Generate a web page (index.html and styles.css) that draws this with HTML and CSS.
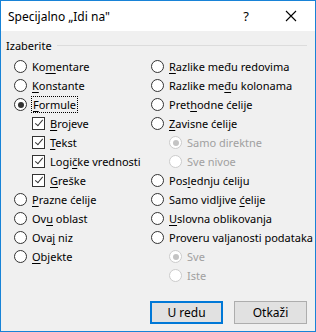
FILE: index.html
```html
<!DOCTYPE html>
<html lang="sr">
<head>
    <meta charset="UTF-8">
    <title>Specijalno „Idi na"</title>
    <link rel="stylesheet" href="styles.css">
</head>
<body>
    <div class="dialog">
        <!-- Title bar -->
        <div class="titlebar">
            <span class="title">Specijalno „Idi na"</span>
            <span class="help">?</span>
            <svg class="close" width="12" height="12" viewBox="0 0 12 12">
                <path d="M1 1 L11 11 M11 1 L1 11" stroke="#000" stroke-width="1.1" fill="none"/>
            </svg>
        </div>

        <div class="content">
            <div class="group-label">
                <span>Izaberite</span>
                <div class="line"></div>
            </div>

            <div class="options">
                <div class="column">
                    <div class="opt"><span class="radio"></span><span>Ko<u>m</u>entare</span></div>
                    <div class="opt"><span class="radio"></span><span><u>K</u>onstante</span></div>
                    <div class="opt"><span class="radio checked"></span><span class="focus"><u>F</u>ormule</span></div>
                    <div class="opt sub"><span class="check"></span><span><u>B</u>rojeve</span></div>
                    <div class="opt sub"><span class="check"></span><span><u>T</u>ekst</span></div>
                    <div class="opt sub"><span class="check"></span><span>Logi<u>č</u>ke vrednosti</span></div>
                    <div class="opt sub"><span class="check"></span><span><u>G</u>reške</span></div>
                    <div class="opt"><span class="radio"></span><span><u>P</u>razne ćelije</span></div>
                    <div class="opt"><span class="radio"></span><span>Ov<u>u</u> oblast</span></div>
                    <div class="opt"><span class="radio"></span><span>Ova<u>j</u> niz</span></div>
                    <div class="opt"><span class="radio"></span><span><u>O</u>bjekte</span></div>
                </div>
                <div class="column">
                    <div class="opt"><span class="radio"></span><span><u>R</u>azlike među redovima</span></div>
                    <div class="opt"><span class="radio"></span><span>Razlike me<u>đ</u>u kolonama</span></div>
                    <div class="opt"><span class="radio"></span><span>Pret<u>h</u>odne ćelije</span></div>
                    <div class="opt"><span class="radio"></span><span><u>Z</u>avisne ćelije</span></div>
                    <div class="opt sub disabled"><span class="radio checked"></span><span>Samo direktne</span></div>
                    <div class="opt sub disabled"><span class="radio"></span><span>Sve nivoe</span></div>
                    <div class="opt"><span class="radio"></span><span>Pos<u>l</u>ednju ćeliju</span></div>
                    <div class="opt"><span class="radio"></span><span>Samo vidljive <u>ć</u>elije</span></div>
                    <div class="opt"><span class="radio"></span><span><u>U</u>slovna oblikovanja</span></div>
                    <div class="opt"><span class="radio"></span><span>Proveru valjanosti podataka</span></div>
                    <div class="opt sub disabled"><span class="radio checked"></span><span>Sve</span></div>
                    <div class="opt sub disabled"><span class="radio"></span><span>Iste</span></div>
                </div>
            </div>

            <div class="buttons">
                <button class="default">U redu</button>
                <button>Otkaži</button>
            </div>
        </div>
    </div>
</body>
</html>
```

FILE: styles.css
```css
/* General */
body {
    margin: 0;
    padding: 0;
    font-family: "Noto Sans", Arial, sans-serif;
    font-size: 11px;
    color: #000;
}

.dialog {
    width: 316px;
    height: 332px;
    box-sizing: border-box;
    border: 1px solid #1883d7;
    background-color: #f0f0f0;
    display: flex;
    flex-direction: column;
}

/* Title bar */
.titlebar {
    height: 30px;
    background-color: #fff;
    display: flex;
    align-items: center;
    padding-left: 7px;
    flex-shrink: 0;
}

.titlebar .title {
    flex: 1;
    font-size: 12px;
}

.titlebar .help {
    font-size: 13px;
    margin-right: 36px;
}

.titlebar .close {
    margin-right: 18px;
}

/* Content */
.content {
    flex: 1;
    display: flex;
    flex-direction: column;
    padding: 5px 8px 0 5px;
}

.group-label {
    display: flex;
    align-items: center;
    height: 18px;
}

.group-label .line {
    flex: 1;
    height: 1px;
    background-color: #dcdcdc;
    margin-left: 5px;
}

.options {
    display: grid;
    grid-template-columns: 137px 1fr;
    padding-left: 8px;
    margin-top: 3px;
}

.opt {
    height: 19px;
    display: flex;
    align-items: center;
    white-space: nowrap;
}

.opt.sub {
    padding-left: 18px;
}

.opt.disabled {
    color: #a0a0a0;
}

u {
    text-decoration-thickness: 1px;
    text-underline-offset: 2px;
}

/* Radio buttons and checkboxes */
.radio {
    width: 11px;
    height: 11px;
    border: 1px solid #333;
    border-radius: 50%;
    background-color: #fff;
    margin-right: 5px;
    position: relative;
    flex-shrink: 0;
}

.radio.checked::after {
    content: "";
    position: absolute;
    left: 2.5px;
    top: 2.5px;
    width: 6px;
    height: 6px;
    border-radius: 50%;
    background-color: #333;
}

.disabled .radio {
    border-color: #ccc;
}

.disabled .radio.checked::after {
    background-color: #c4c4c4;
}

.check {
    width: 11px;
    height: 11px;
    border: 1px solid #333;
    background-color: #fff;
    margin-right: 5px;
    position: relative;
    flex-shrink: 0;
}

.check::after {
    content: "";
    position: absolute;
    left: 3.5px;
    top: 0px;
    width: 3px;
    height: 7px;
    border: solid #333;
    border-width: 0 1px 1px 0;
    transform: rotate(40deg);
}

.focus {
    outline: 1px dotted #000;
    outline-offset: 0;
    padding: 0 1px;
}

/* Buttons */
.buttons {
    display: flex;
    justify-content: flex-end;
    gap: 11px;
    margin-top: 16px;
}

button {
    width: 73px;
    height: 23px;
    font-family: "Noto Sans", Arial, sans-serif;
    font-size: 12px;
    background-color: #e1e1e1;
    border: 1px solid #adadad;
    padding: 0;
}

button.default {
    border: 2px solid #0078d7;
}
```
